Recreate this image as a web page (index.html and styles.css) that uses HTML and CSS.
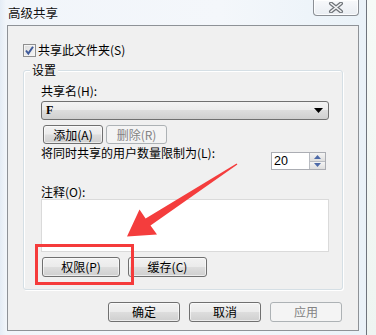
FILE: index.html
```html
<!DOCTYPE html>
<html lang="zh-CN">
<head>
<meta charset="utf-8">
<title>高级共享</title>
<link rel="stylesheet" href="styles.css">
</head>
<body>
<div class="screen">
  <div class="window">
    <div class="titlebar">
      <div class="title">高级共享</div>
      <div class="close">
        <svg width="16" height="11" viewBox="0 0 16 11">
          <path d="M3 1.5 L13 9.5 M13 1.5 L3 9.5" stroke="#6f7378" stroke-width="4" stroke-linecap="round"/>
          <path d="M3 1.5 L13 9.5 M13 1.5 L3 9.5" stroke="#f4f5f7" stroke-width="1.6" stroke-linecap="round"/>
        </svg>
      </div>
    </div>
    <div class="panel">
      <div class="check-row">
        <span class="checkbox">
          <svg width="11" height="11" viewBox="0 0 11 11"><path d="M2 5.5 L4.3 8.5 L9 1.8" fill="none" stroke="#3f5a9a" stroke-width="2"/></svg>
        </span>
        <span>共享此文件夹(S)</span>
      </div>
      <div class="group">
        <div class="legend">设置</div>
        <div class="label first">共享名(H):</div>
        <div class="select">
          <span>F</span>
          <svg width="9" height="5" viewBox="0 0 9 5"><path d="M0 0 H9 L4.5 5 Z" fill="#000"/></svg>
        </div>
        <div class="btn-row">
          <div class="btn w60">添加(A)</div>
          <div class="btn w61 disabled">删除(R)</div>
        </div>
        <div class="limit-row">
          <div class="label">将同时共享的用户数量限制为(L):</div>
          <div class="spin">
            <span class="spin-val">20</span>
            <span class="spin-btns">
              <span class="spin-btn"><svg width="7" height="4" viewBox="0 0 7 4"><path d="M0 4 L3.5 0 L7 4 Z" fill="#4d6aa8"/></svg></span>
              <span class="spin-btn"><svg width="7" height="4" viewBox="0 0 7 4"><path d="M0 0 L7 0 L3.5 4 Z" fill="#4d6aa8"/></svg></span>
            </span>
          </div>
        </div>
        <div class="label note">注释(O):</div>
        <div class="textarea"></div>
        <div class="btn-row gap8">
          <div class="btn w78">权限(P)</div>
          <div class="btn w79">缓存(C)</div>
        </div>
      </div>
      <div class="footer">
        <div class="btn w72 tall">确定</div>
        <div class="btn w72 tall">取消</div>
        <div class="btn w72 tall disabled">应用</div>
      </div>
    </div>
  </div>
  <div class="outside"></div>
  <div class="highlight"></div>
  <svg class="arrow" width="376" height="335" viewBox="0 0 376 335">
    <polygon points="237.4,164.5 150.5,225.6 157,234.5 127,236.5 139.5,209.5 145.6,218.4 236.6,163.5" fill="#f43d3d"/>
  </svg>
</div>
</body>
</html>
```

FILE: styles.css
```css
* { box-sizing: border-box; }
html, body { margin: 0; padding: 0; }
body {
  font-family: "Noto Sans CJK SC", "Liberation Sans", sans-serif;
  font-size: 12px;
  color: #000;
  background: #eef4f2;
}
.screen {
  position: relative;
  width: 376px;
  height: 335px;
  overflow: hidden;
  display: flex;
}
.window {
  width: 367px;
  height: 335px;
  display: flex;
  flex-direction: column;
  border-right: 1px solid #6e747c;
  background: linear-gradient(90deg, #e4ecf5 0px, #f1f5fa 6px, #f4f7fb 60%, #eaf2f8 100%);
}
.titlebar {
  height: 25px;
  display: flex;
  align-items: flex-start;
}
.title {
  padding: 5px 0 0 8px;
  line-height: 15px;
  font-size: 12.5px;
  color: #111;
}
.close {
  margin-left: auto;
  margin-right: 7px;
  width: 46px;
  height: 16px;
  border: 1px solid #8b8f95;
  border-top: none;
  border-radius: 0 0 4px 4px;
  background: linear-gradient(#f8f9fb, #e9edf2);
  box-shadow: inset 0 0 0 1px rgba(255,255,255,0.8);
  display: flex;
  align-items: center;
  justify-content: center;
}
.close svg { display: block; margin-top: -1px; }
.panel {
  margin-left: 7px;
  width: 352px;
  height: 306px;
  border: 1px solid #8e9297;
  background: #f0f0f0;
  padding: 0 0 0 15px;
  display: flex;
  flex-direction: column;
}
.check-row {
  margin-top: 17px;
  height: 14px;
  display: flex;
  align-items: center;
  line-height: 14px;
}
.checkbox {
  width: 13px;
  height: 13px;
  border: 1px solid #8f8f8f;
  background: linear-gradient(135deg, #dcdcdc, #f6f6f6);
  box-shadow: inset 0 0 0 1px #f4f4f4;
  display: flex;
  align-items: center;
  justify-content: center;
  margin-right: 2px;
}
.checkbox svg { display: block; }
.group {
  margin-top: 13px;
  width: 320px;
  height: 220px;
  border: 1px solid #d5dfe5;
  border-radius: 3px;
  box-shadow: inset 1px 1px 0 #fff, 1px 1px 0 #fff;
  padding: 0 14px 0 17px;
  display: flex;
  flex-direction: column;
}
.legend {
  margin: -8px 0 0 -11px;
  padding: 0 2px;
  width: fit-content;
  line-height: 14px;
  background: #f0f0f0;
  font-size: 12px;
}
.label {
  line-height: 14px;
  height: 14px;
  white-space: nowrap;
}
.label.first { margin-top: 7px; }
.select {
  margin-top: 3px;
  width: 288px;
  height: 19px;
  border: 1px solid #707070;
  border-radius: 3px;
  background: linear-gradient(#f3f3f3 0%, #ebebeb 50%, #dddddd 50%, #cfcfcf 100%);
  display: flex;
  align-items: center;
  justify-content: space-between;
  padding: 0 5px 0 4px;
  font-family: "Liberation Serif", serif;
  font-weight: bold;
  font-size: 12px;
}
.select svg { display: block; }
.btn-row {
  margin-top: 5px;
  display: flex;
  gap: 3px;
}
.btn-row.gap8 { gap: 8px; margin-left: 1px; }
.btn {
  height: 19px;
  border: 1px solid #707070;
  border-radius: 3px;
  background: linear-gradient(#f2f2f2 0%, #ebebeb 48%, #dddddd 52%, #cfcfcf 100%);
  box-shadow: inset 0 0 0 1px rgba(255,255,255,0.6);
  display: flex;
  align-items: center;
  justify-content: center;
  line-height: 14px;
  white-space: nowrap;
}
.btn.disabled {
  border-color: #adb2b5;
  background: #f4f4f4;
  color: #838383;
  box-shadow: none;
}
.btn.tall { height: 20px; }
.w60 { width: 60px; margin-left: 2px; }
.w61 { width: 61px; }
.w72 { width: 72px; }
.w78 { width: 78px; height: 20px; }
.w79 { width: 79px; height: 20px; }
.limit-row {
  margin-top: 2px;
  display: flex;
  justify-content: space-between;
  align-items: flex-start;
  padding-right: 2px;
}
.spin {
  margin-top: 6px;
  width: 55px;
  height: 18px;
  border: 1px solid #abadb3;
  background: #fff;
  display: flex;
  align-items: stretch;
}
.spin-val {
  flex: 1;
  padding-left: 2px;
  line-height: 16px;
  font-family: "Liberation Sans", sans-serif;
  font-size: 12.5px;
}
.spin-btns {
  width: 16px;
  display: flex;
  flex-direction: column;
  border-left: 1px solid #b9bcc2;
}
.spin-btn {
  flex: 1;
  display: flex;
  align-items: center;
  justify-content: center;
  background: linear-gradient(#f4f4f4, #dedede);
  border-bottom: 1px solid #b9bcc2;
}
.spin-btn:last-child { border-bottom: none; }
.spin-btn svg { display: block; }
.label.note { margin-top: 15px; }
.textarea {
  width: 288px;
  height: 53px;
  border: 1px solid #dadada;
  background: #fff;
}
.footer {
  margin-top: 12px;
  padding-right: 16px;
  display: flex;
  justify-content: flex-end;
  gap: 9px;
}
.outside {
  flex: 1;
  background: linear-gradient(#f6faf7, #eef4f1);
}
.highlight {
  position: absolute;
  left: 35px;
  top: 244px;
  width: 99px;
  height: 41px;
  border: 3px solid #f53b3b;
}
.arrow {
  position: absolute;
  left: 0;
  top: 0;
}
```
